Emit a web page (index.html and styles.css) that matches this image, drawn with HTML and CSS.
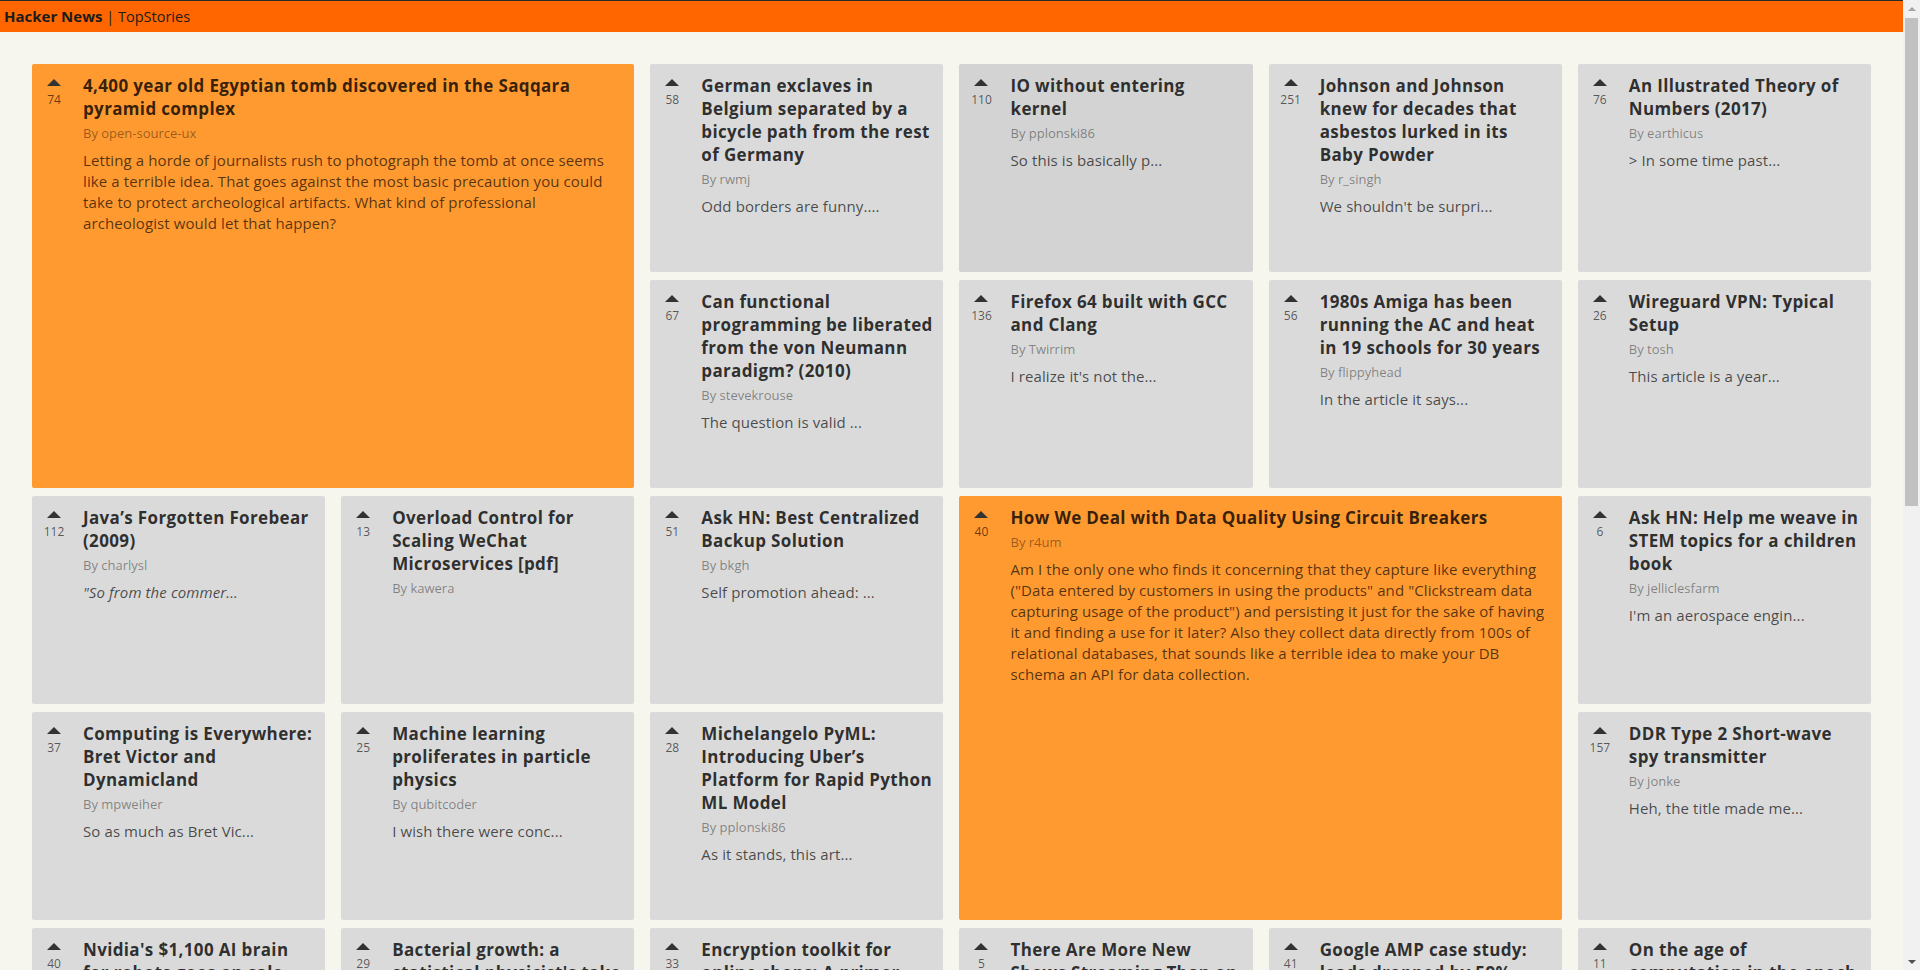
FILE: index.html
```html
<!DOCTYPE html>
<html lang="en">
<head>
<meta charset="utf-8">
<title>Hacker News | TopStories</title>
<link rel="stylesheet" href="styles.css">
</head>
<body>
<div class="page">
<header class="topbar"><b class="brand">Hacker News</b> | TopStories</header>
<main class="grid">
  <article class="story featured">
    <div class="vote"><span class="arrow"></span><span class="score">74</span></div>
    <div class="content">
      <h2 class="title">4,400 year old Egyptian tomb discovered in the Saqqara pyramid complex</h2>
      <div class="by">By open-source-ux</div>
      <p class="text">Letting a horde of journalists rush to photograph the tomb at once seems like a terrible idea. That goes against the most basic precaution you could take to protect archeological artifacts. What kind of professional archeologist would let that happen?</p>
    </div>
  </article>
  <article class="story">
    <div class="vote"><span class="arrow"></span><span class="score">58</span></div>
    <div class="content">
      <h2 class="title">German exclaves in Belgium separated by a bicycle path from the rest of Germany</h2>
      <div class="by">By rwmj</div>
      <p class="text">Odd borders are funny....</p>
    </div>
  </article>
  <article class="story hovered">
    <div class="vote"><span class="arrow"></span><span class="score">110</span></div>
    <div class="content">
      <h2 class="title">IO without entering kernel</h2>
      <div class="by">By pplonski86</div>
      <p class="text">So this is basically p...</p>
    </div>
  </article>
  <article class="story">
    <div class="vote"><span class="arrow"></span><span class="score">251</span></div>
    <div class="content">
      <h2 class="title">Johnson and Johnson knew for decades that asbestos lurked in its Baby Powder</h2>
      <div class="by">By r_singh</div>
      <p class="text">We shouldn't be surpri...</p>
    </div>
  </article>
  <article class="story">
    <div class="vote"><span class="arrow"></span><span class="score">76</span></div>
    <div class="content">
      <h2 class="title">An Illustrated Theory of Numbers (2017)</h2>
      <div class="by">By earthicus</div>
      <p class="text">&gt; In some time past...</p>
    </div>
  </article>
  <article class="story">
    <div class="vote"><span class="arrow"></span><span class="score">67</span></div>
    <div class="content">
      <h2 class="title">Can functional programming be liberated from the von Neumann paradigm? (2010)</h2>
      <div class="by">By stevekrouse</div>
      <p class="text">The question is valid ...</p>
    </div>
  </article>
  <article class="story">
    <div class="vote"><span class="arrow"></span><span class="score">136</span></div>
    <div class="content">
      <h2 class="title">Firefox 64 built with GCC and Clang</h2>
      <div class="by">By Twirrim</div>
      <p class="text">I realize it's not the...</p>
    </div>
  </article>
  <article class="story">
    <div class="vote"><span class="arrow"></span><span class="score">56</span></div>
    <div class="content">
      <h2 class="title">1980s Amiga has been running the AC and heat in 19 schools for 30 years</h2>
      <div class="by">By flippyhead</div>
      <p class="text">In the article it says...</p>
    </div>
  </article>
  <article class="story">
    <div class="vote"><span class="arrow"></span><span class="score">26</span></div>
    <div class="content">
      <h2 class="title">Wireguard VPN: Typical Setup</h2>
      <div class="by">By tosh</div>
      <p class="text">This article is a year...</p>
    </div>
  </article>
  <article class="story">
    <div class="vote"><span class="arrow"></span><span class="score">112</span></div>
    <div class="content">
      <h2 class="title">Java’s Forgotten Forebear (2009)</h2>
      <div class="by">By charlysl</div>
      <p class="text"><i>"So from the commer...</i></p>
    </div>
  </article>
  <article class="story">
    <div class="vote"><span class="arrow"></span><span class="score">13</span></div>
    <div class="content">
      <h2 class="title">Overload Control for Scaling WeChat Microservices [pdf]</h2>
      <div class="by">By kawera</div>
    </div>
  </article>
  <article class="story">
    <div class="vote"><span class="arrow"></span><span class="score">51</span></div>
    <div class="content">
      <h2 class="title">Ask HN: Best Centralized Backup Solution</h2>
      <div class="by">By bkgh</div>
      <p class="text">Self promotion ahead: ...</p>
    </div>
  </article>
  <article class="story featured">
    <div class="vote"><span class="arrow"></span><span class="score">40</span></div>
    <div class="content">
      <h2 class="title">How We Deal with Data Quality Using Circuit Breakers</h2>
      <div class="by">By r4um</div>
      <p class="text">Am I the only one who finds it concerning that they capture like everything ("Data entered by customers in using the products" and "Clickstream data capturing usage of the product") and persisting it just for the sake of having it and finding a use for it later? Also they collect data directly from 100s of relational databases, that sounds like a terrible idea to make your DB schema an API for data collection.</p>
    </div>
  </article>
  <article class="story">
    <div class="vote"><span class="arrow"></span><span class="score">6</span></div>
    <div class="content">
      <h2 class="title">Ask HN: Help me weave in STEM topics for a children book</h2>
      <div class="by">By jelliclesfarm</div>
      <p class="text">I'm an aerospace engin...</p>
    </div>
  </article>
  <article class="story">
    <div class="vote"><span class="arrow"></span><span class="score">37</span></div>
    <div class="content">
      <h2 class="title">Computing is Everywhere: Bret Victor and Dynamicland</h2>
      <div class="by">By mpweiher</div>
      <p class="text">So as much as Bret Vic...</p>
    </div>
  </article>
  <article class="story">
    <div class="vote"><span class="arrow"></span><span class="score">25</span></div>
    <div class="content">
      <h2 class="title">Machine learning proliferates in particle physics</h2>
      <div class="by">By qubitcoder</div>
      <p class="text">I wish there were conc...</p>
    </div>
  </article>
  <article class="story">
    <div class="vote"><span class="arrow"></span><span class="score">28</span></div>
    <div class="content">
      <h2 class="title">Michelangelo PyML: Introducing Uber’s Platform for Rapid Python ML Model</h2>
      <div class="by">By pplonski86</div>
      <p class="text">As it stands, this art...</p>
    </div>
  </article>
  <article class="story">
    <div class="vote"><span class="arrow"></span><span class="score">157</span></div>
    <div class="content">
      <h2 class="title">DDR Type 2 Short-wave spy transmitter</h2>
      <div class="by">By jonke</div>
      <p class="text">Heh, the title made me...</p>
    </div>
  </article>
  <article class="story">
    <div class="vote"><span class="arrow"></span><span class="score">40</span></div>
    <div class="content">
      <h2 class="title">Nvidia's $1,100 AI brain for robots goes on sale</h2>
      <div class="by">By Tomte</div>
      <p class="text">The Jetson boards are...</p>
    </div>
  </article>
  <article class="story">
    <div class="vote"><span class="arrow"></span><span class="score">29</span></div>
    <div class="content">
      <h2 class="title">Bacterial growth: a statistical physicist's take</h2>
      <div class="by">By bryanrasmussen</div>
      <p class="text">This reminds me of a...</p>
    </div>
  </article>
  <article class="story">
    <div class="vote"><span class="arrow"></span><span class="score">33</span></div>
    <div class="content">
      <h2 class="title">Encryption toolkit for online shops: A primer</h2>
      <div class="by">By luu</div>
      <p class="text">I skimmed through the...</p>
    </div>
  </article>
  <article class="story">
    <div class="vote"><span class="arrow"></span><span class="score">5</span></div>
    <div class="content">
      <h2 class="title">There Are More New Shows Streaming Than on TV</h2>
      <div class="by">By pseudolus</div>
      <p class="text">Most of them are not...</p>
    </div>
  </article>
  <article class="story">
    <div class="vote"><span class="arrow"></span><span class="score">41</span></div>
    <div class="content">
      <h2 class="title">Google AMP case study: leads dropped by 59%</h2>
      <div class="by">By ukutaht</div>
      <p class="text">Interesting results, b...</p>
    </div>
  </article>
  <article class="story">
    <div class="vote"><span class="arrow"></span><span class="score">11</span></div>
    <div class="content">
      <h2 class="title">On the age of computation in the epoch of humankind</h2>
      <div class="by">By mpweiher</div>
      <p class="text">Long read, but worth...</p>
    </div>
  </article>
  <article class="story featured">
    <div class="vote"><span class="arrow"></span><span class="score">212</span></div>
    <div class="content">
      <h2 class="title">Show HN: A minimal terminal text editor written in 1,000 lines of C</h2>
      <div class="by">By snaptoliet</div>
      <p class="text">I wrote this over a couple of weekends to learn how terminals handle raw input, escape sequences and screen refreshes. It has syntax highlighting and incremental search.</p>
    </div>
  </article>
  <article class="story">
    <div class="vote"><span class="arrow"></span><span class="score">88</span></div>
    <div class="content">
      <h2 class="title">The History of the URL</h2>
      <div class="by">By zackbloom</div>
      <p class="text">Fascinating read, I...</p>
    </div>
  </article>
  <article class="story">
    <div class="vote"><span class="arrow"></span><span class="score">19</span></div>
    <div class="content">
      <h2 class="title">Why Raft is hard to get right in practice</h2>
      <div class="by">By kiyanwang</div>
      <p class="text">The paper glosses ove...</p>
    </div>
  </article>
  <article class="story">
    <div class="vote"><span class="arrow"></span><span class="score">64</span></div>
    <div class="content">
      <h2 class="title">A visual introduction to Fourier transforms</h2>
      <div class="by">By adamnemecek</div>
      <p class="text">This is the best expl...</p>
    </div>
  </article>
  <article class="story">
    <div class="vote"><span class="arrow"></span><span class="score">9</span></div>
    <div class="content">
      <h2 class="title">Lessons from building a static site generator</h2>
      <div class="by">By bauc</div>
      <p class="text">Every developer seems...</p>
    </div>
  </article>
  <article class="story">
    <div class="vote"><span class="arrow"></span><span class="score">143</span></div>
    <div class="content">
      <h2 class="title">SQLite as an application file format</h2>
      <div class="by">By tosh</div>
      <p class="text">We switched to this a...</p>
    </div>
  </article>
  <article class="story">
    <div class="vote"><span class="arrow"></span><span class="score">22</span></div>
    <div class="content">
      <h2 class="title">The surprising economics of public libraries</h2>
      <div class="by">By pseudolus</div>
      <p class="text">My local library has...</p>
    </div>
  </article>
  <article class="story">
    <div class="vote"><span class="arrow"></span><span class="score">47</span></div>
    <div class="content">
      <h2 class="title">Writing a Game Boy emulator from scratch</h2>
      <div class="by">By ingve</div>
      <p class="text">The timing of the PPU...</p>
    </div>
  </article>
  <article class="story">
    <div class="vote"><span class="arrow"></span><span class="score">31</span></div>
    <div class="content">
      <h2 class="title">How the Apollo guidance computer was programmed</h2>
      <div class="by">By jonbaer</div>
      <p class="text">Core rope memory is s...</p>
    </div>
  </article>
  <article class="story">
    <div class="vote"><span class="arrow"></span><span class="score">15</span></div>
    <div class="content">
      <h2 class="title">A guide to Linux kernel live patching</h2>
      <div class="by">By rbanffy</div>
      <p class="text">We use kpatch in prod...</p>
    </div>
  </article>
  <article class="story">
    <div class="vote"><span class="arrow"></span><span class="score">73</span></div>
    <div class="content">
      <h2 class="title">Rust 2018 is here, but what is it?</h2>
      <div class="by">By steveklabnik</div>
      <p class="text">The edition system is...</p>
    </div>
  </article>
  <article class="story">
    <div class="vote"><span class="arrow"></span><span class="score">8</span></div>
    <div class="content">
      <h2 class="title">The lost art of the index card</h2>
      <div class="by">By Tomte</div>
      <p class="text">I still keep a box of...</p>
    </div>
  </article>
  <article class="story">
    <div class="vote"><span class="arrow"></span><span class="score">54</span></div>
    <div class="content">
      <h2 class="title">Understanding memory ordering in C++</h2>
      <div class="by">By nkurz</div>
      <p class="text">Acquire and release a...</p>
    </div>
  </article>
  <article class="story">
    <div class="vote"><span class="arrow"></span><span class="score">27</span></div>
    <div class="content">
      <h2 class="title">Ask HN: What are you reading this month?</h2>
      <div class="by">By danso</div>
      <p class="text">Currently halfway thr...</p>
    </div>
  </article>
  <article class="story">
    <div class="vote"><span class="arrow"></span><span class="score">96</span></div>
    <div class="content">
      <h2 class="title">The design of the Unix shell pipeline</h2>
      <div class="by">By fanf2</div>
      <p class="text">Doug McIlroy's origin...</p>
    </div>
  </article>
  <article class="story">
    <div class="vote"><span class="arrow"></span><span class="score">12</span></div>
    <div class="content">
      <h2 class="title">Mapping the world's ocean floor</h2>
      <div class="by">By dnetesn</div>
      <p class="text">It's amazing how litt...</p>
    </div>
  </article>
  <article class="story">
    <div class="vote"><span class="arrow"></span><span class="score">38</span></div>
    <div class="content">
      <h2 class="title">A practical guide to property-based testing</h2>
      <div class="by">By hwayne</div>
      <p class="text">Hypothesis changed ho...</p>
    </div>
  </article>
</main>
</div>
<div class="scrollbar" aria-hidden="true">
  <div class="sb-btn sb-up"><span class="sb-arrow-up"></span></div>
  <div class="sb-track"><div class="sb-thumb"></div></div>
  <div class="sb-btn sb-down"><span class="sb-arrow-down"></span></div>
</div>
</body>
</html>
```
FILE: styles.css
```css
* {
  box-sizing: border-box;
}

html,
body {
  margin: 0;
  padding: 0;
}

html {
  scrollbar-width: none;
}

html::-webkit-scrollbar {
  display: none;
}

body {
  background: #f6f6ef;
  font-family: "Open Sans", "Noto Sans", sans-serif;
  color: #222;
}

.page {
  margin-right: 17px;
}

.topbar {
  height: 32px;
  border-top: 1px solid #2b2b2b;
  background: #ff6600;
  padding: 1px 0 0 4px;
  font-size: 14.5px;
  line-height: 29px;
  color: #1c1c1c;
}

.brand {
  font-size: 15px;
  font-weight: 700;
}

.grid {
  display: grid;
  grid-template-columns: repeat(6, 1fr);
  grid-auto-rows: 208px;
  column-gap: 16px;
  row-gap: 8px;
  padding: 32px 32px 76px 32px;
}

.story {
  display: flex;
  background: #dadada;
  border-radius: 2px;
  padding: 10px 10px 10px 9px;
  overflow: hidden;
}

.story.hovered {
  background: #d3d3d3;
}

.story.featured {
  grid-column: span 2;
  grid-row: span 2;
  background: #ff9a30;
}

.vote {
  flex: none;
  width: 26px;
  display: flex;
  flex-direction: column;
  align-items: center;
  padding-top: 5px;
}

.arrow {
  width: 0;
  height: 0;
  border-left: 7px solid transparent;
  border-right: 7px solid transparent;
  border-bottom: 7px solid #333;
}

.score {
  margin-top: 6px;
  font-size: 12px;
  line-height: 16px;
  color: rgba(0, 0, 0, 0.62);
}

.content {
  flex: 1;
  min-width: 0;
  margin-left: 16px;
}

.title {
  margin: 0;
  font-size: 17px;
  line-height: 23px;
  letter-spacing: 0.35px;
  font-weight: 700;
  color: rgba(0, 0, 0, 0.8);
}

.by {
  margin-top: 4px;
  font-size: 13px;
  line-height: 18px;
  color: rgba(0, 0, 0, 0.42);
}

.text {
  margin: 8px 0 0;
  font-size: 15px;
  line-height: 21px;
  letter-spacing: 0.1px;
  color: rgba(0, 0, 0, 0.68);
}

/* imitation of the classic browser scrollbar at the right edge */
.scrollbar {
  position: fixed;
  top: 0;
  right: 0;
  bottom: 0;
  width: 17px;
  display: flex;
  flex-direction: column;
  background: #f1f1f1;
}

.sb-btn {
  flex: none;
  height: 17px;
  display: flex;
  align-items: center;
  justify-content: center;
}

.sb-arrow-up {
  width: 0;
  height: 0;
  border-left: 4px solid transparent;
  border-right: 4px solid transparent;
  border-bottom: 4px solid #a3a3a3;
}

.sb-arrow-down {
  width: 0;
  height: 0;
  border-left: 4px solid transparent;
  border-right: 4px solid transparent;
  border-top: 4px solid #505050;
}

.sb-track {
  flex: 1;
  padding: 1px 2px 0;
}

.sb-thumb {
  height: 488px;
  background: #c1c1c1;
}
```
